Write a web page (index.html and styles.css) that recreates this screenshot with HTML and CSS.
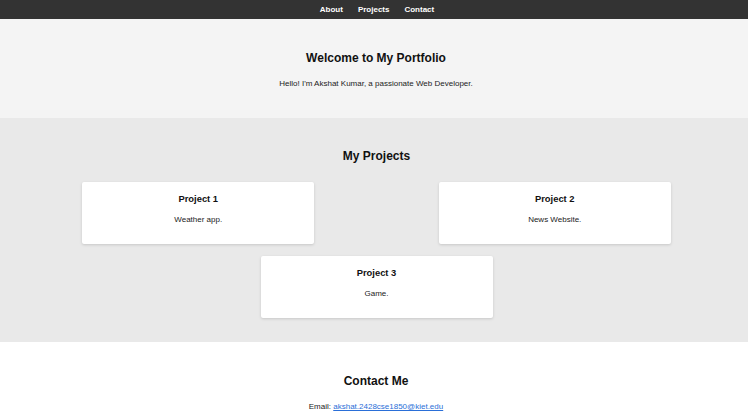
FILE: index.html
```html
<!DOCTYPE html>
<html lang="en">
<head>
<meta charset="utf-8">
<title>My Portfolio</title>
<link rel="stylesheet" href="styles.css">
</head>
<body>
<nav class="nav">
  <a href="#about" class="nav-link">About</a>
  <a href="#projects" class="nav-link">Projects</a>
  <a href="#contact" class="nav-link">Contact</a>
</nav>
<section class="section hero" id="about">
  <h1 class="title">Welcome to My Portfolio</h1>
  <p class="text">Hello! I'm Akshat Kumar, a passionate Web Developer.</p>
</section>
<section class="section projects" id="projects">
  <h2 class="title">My Projects</h2>
  <div class="cards">
    <div class="card"><h3 class="card-title">Project 1</h3><p class="card-text">Weather app.</p></div>
    <div class="card"><h3 class="card-title">Project 2</h3><p class="card-text">News Website.</p></div>
    <div class="card"><h3 class="card-title">Project 3</h3><p class="card-text">Game.</p></div>
  </div>
</section>
<section class="section contact" id="contact">
  <h2 class="title">Contact Me</h2>
  <p class="text">Email: <a class="mail" href="mailto:akshat.2428cse1850@kiet.edu">akshat.2428cse1850@kiet.edu</a></p>
</section>
</body>
</html>
```
FILE: styles.css
```css
html, body {
  margin: 0;
  padding: 0;
}
body {
  font-family: "Liberation Sans", Arial, sans-serif;
  font-size: 8px;
  color: #222;
  background: #fff;
}
.nav {
  background: #333;
  height: 19px;
  display: flex;
  justify-content: center;
  align-items: center;
  gap: 15px;
  padding-left: 6px;
}
.nav-link {
  color: #fff;
  font-weight: bold;
  text-decoration: none;
  font-size: 8px;
  line-height: 10px;
}
.section {
  text-align: center;
  padding: 20px 0;
}
.hero {
  background: #f4f4f4;
  padding-left: 4px;
}
.projects {
  background: #e9e9e9;
  padding: 20px 15px 24px 20px;
}
.contact {
  background: #fff;
  padding-left: 4px;
}
.title {
  font-size: 12px;
  line-height: 14px;
  font-weight: bold;
  color: #111;
  margin: 12px 0 14px;
}
.projects .title {
  margin: 11px 0 19px;
}
.text {
  margin: 0 0 9px;
  line-height: 10px;
}
.cards {
  display: flex;
  flex-wrap: wrap;
  justify-content: space-around;
  row-gap: 12px;
}
.card {
  width: 232px;
  box-sizing: border-box;
  margin: 0 50px;
  background: #fff;
  border-radius: 2px;
  box-shadow: 0 1px 3px rgba(0, 0, 0, 0.15);
  padding: 10px;
}
.card-title {
  font-size: 9.4px;
  line-height: 11px;
  font-weight: bold;
  color: #111;
  margin: 1px 0 11px;
}
.card-text {
  margin: 0 0 9px;
  line-height: 10px;
}
.mail {
  color: #2a6fd8;
  text-decoration: underline;
}
```
